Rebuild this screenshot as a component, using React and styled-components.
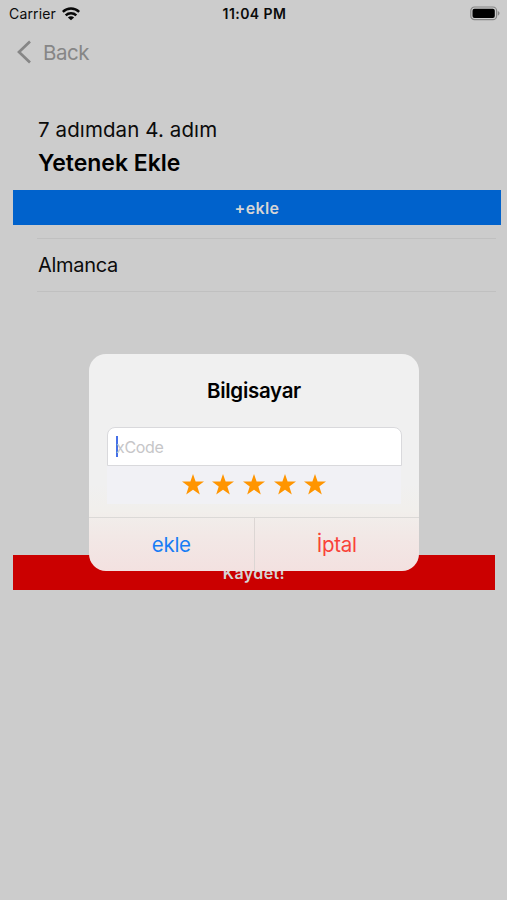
// Core
import React from 'react';
import styled, { createGlobalStyle, css } from 'styled-components';

const GlobalStyle = createGlobalStyle`
    * {
        box-sizing: border-box;
    }
    body {
        margin: 0;
        background-color: #ccc;
        font-family: Inter, 'Liberation Sans', sans-serif;
        color: #0b0b0b;
    }
`;

const Screen = styled.main`
    position: relative;
    display: flex;
    flex-direction: column;
    width: 507px;
    height: 900px;
    overflow: hidden;
    background-color: #ccc;
`;
const StatusBar = styled.header`
    display: grid;
    grid-template-columns: 1fr auto 1fr;
    align-items: center;
    height: 27px;
    padding: 0 7px 0 9px;
`;
const Carrier = styled.div`
    display: flex;
    align-items: center;
    gap: 6px;
    font-size: 14px;
    letter-spacing: 0.15px;
`;
const Clock = styled.div`
    font-size: 14px;
    font-weight: 600;
    letter-spacing: 0.45px;
`;
const BatteryIcon = styled.svg`
    justify-self: end;
`;
const BackLink = styled.button`
    display: flex;
    align-items: center;
    align-self: flex-start;
    gap: 11px;
    height: 50px;
    padding: 0 17px;
    border: 0;
    background: none;
    color: #868686;
    font: inherit;
    font-size: 20.5px;
    letter-spacing: -0.5px;
`;
const Heading = styled.div`
    display: flex;
    flex-direction: column;
    margin: 37px 0 0 38px;
`;
const Step = styled.p`
    margin: 0;
    font-size: 20.5px;
    line-height: 31px;
    letter-spacing: 0.1px;
`;
const Title = styled.h1`
    margin: 0;
    color: #000;
    font-size: 23px;
    font-weight: 600;
    line-height: 37px;
    letter-spacing: 0;
`;
const BarButton = styled.button`
    flex: none;
    height: 35px;
    padding: 0;
    border: 0;
    color: #d5d5d5;
    font: inherit;
    font-size: 16px;
    font-weight: 600;
    letter-spacing: 0.4px;
    ${({ $danger }) =>
        $danger
            ? css`
                  margin: 0 12px 0 13px;
                  background-color: #cb0000;
              `
            : css`
                  margin: 8px 6px 0 13px;
                  background-color: #0062cc;
              `}
`;
const SkillList = styled.ul`
    height: 317px;
    margin: 13px 11px 0 37px;
    padding: 0;
    list-style: none;
`;
const SkillItem = styled.li`
    height: 54px;
    padding-left: 1px;
    border: solid #c0c0c0;
    border-width: 1px 0;
    font-size: 20px;
    line-height: 52px;
    letter-spacing: -0.3px;
`;
const Dialog = styled.section`
    position: absolute;
    top: 354px;
    left: 89px;
    display: flex;
    flex-direction: column;
    width: 330px;
    height: 217px;
    overflow: hidden;
    border-radius: 17px;
    background: linear-gradient(#f0f0f0 0 60%, #f1efec 72%, #f2e8e6 84%, #f3e1e0);
`;
const DialogTitle = styled.h2`
    margin: 24px 0 0;
    color: #000;
    font-size: 20.5px;
    font-weight: 600;
    line-height: 26px;
    letter-spacing: -0.3px;
    text-align: center;
`;
const Field = styled.div`
    display: flex;
    align-items: center;
    height: 39px;
    margin: 23px 17px 0 18px;
    padding-left: 8px;
    border: 1px solid #d9d9dc;
    border-radius: 8px 8px 0 0;
    background-color: #fff;
    color: #c6c6c8;
    font-size: 16px;
    letter-spacing: -0.3px;
`;
const Caret = styled.span`
    width: 2px;
    height: 21px;
    margin-right: -2px;
    background-color: #4670e8;
`;
const Rating = styled.div`
    display: flex;
    justify-content: center;
    gap: 8.6px;
    height: 38px;
    margin: 0 18px;
    padding-top: 8px;
    background-color: #f1f1f5;
`;
const Actions = styled.div`
    display: flex;
    flex: 1;
    margin-top: 13px;
    border-top: 1px solid #dbd9d7;
`;
const Action = styled.button`
    flex: 1;
    padding: 0;
    border: 0;
    background: none;
    color: ${({ $color }) => $color};
    font: inherit;
    font-size: 20.5px;
    letter-spacing: -0.3px;

    &:first-child {
        border-right: 1px solid #dcd6d4;
    }
`;

const Wifi = () => (
    <svg width="18" height="14" viewBox="0 0 18 14">
        <g fill="none" stroke="#080808" strokeWidth="2.5">
            <path d="M.8 4.9C5.4.5 12.6.5 17.2 4.9" />
            <path d="M3.7 8.3c3-2.8 7.6-2.8 10.6 0" />
        </g>
        <path d="M5.9 10.4c1.8-1.6 4.4-1.6 6.2 0L9 13.3z" fill="#080808" />
    </svg>
);

const Battery = () => (
    <BatteryIcon width="30" height="15" viewBox="0 0 30 15">
        <rect
            x=".8"
            y="1"
            width="25.8"
            height="12.6"
            rx="3.7"
            fill="none"
            stroke="#858585"
            strokeWidth="1.2"
        />
        <rect x="2.5" y="2.7" width="22.3" height="9.3" rx="2" fill="#000" />
        <path d="M27.8 5c2.3.8 2.3 3.8 0 4.6z" fill="#858585" />
    </BatteryIcon>
);

const BackArrow = () => (
    <svg width="15" height="24" viewBox="0 0 15 24">
        <path
            d="M13 1.5 2 12l11 10.5"
            fill="none"
            stroke="#868686"
            strokeWidth="2.7"
        />
    </svg>
);

const Star = () => (
    <svg width="22" height="21" viewBox="0 0 22 21">
        <path
            d="m11 0 2.6 7.6H22l-6.7 4.9 2.5 8L11 15.7l-6.8 4.8 2.5-8L0 7.6h8.4z"
            fill="#ff9500"
        />
    </svg>
);

const App = () => (
    <>
        <GlobalStyle />
        <Screen>
            <StatusBar>
                <Carrier>
                    Carrier
                    <Wifi />
                </Carrier>
                <Clock>11:04 PM</Clock>
                <Battery />
            </StatusBar>
            <BackLink>
                <BackArrow />
                Back
            </BackLink>
            <Heading>
                <Step>7 adımdan 4. adım</Step>
                <Title>Yetenek Ekle</Title>
            </Heading>
            <BarButton>+ekle</BarButton>
            <SkillList>
                <SkillItem>Almanca</SkillItem>
            </SkillList>
            <BarButton $danger>Kaydet!</BarButton>
            <Dialog>
                <DialogTitle>Bilgisayar</DialogTitle>
                <Field>
                    <Caret />
                    xCode
                </Field>
                <Rating>
                    {[1, 2, 3, 4, 5].map(value => (
                        <Star key={value} />
                    ))}
                </Rating>
                <Actions>
                    <Action $color="#187cf5">ekle</Action>
                    <Action $color="#f94238">İptal</Action>
                </Actions>
            </Dialog>
        </Screen>
    </>
);

export default App;
